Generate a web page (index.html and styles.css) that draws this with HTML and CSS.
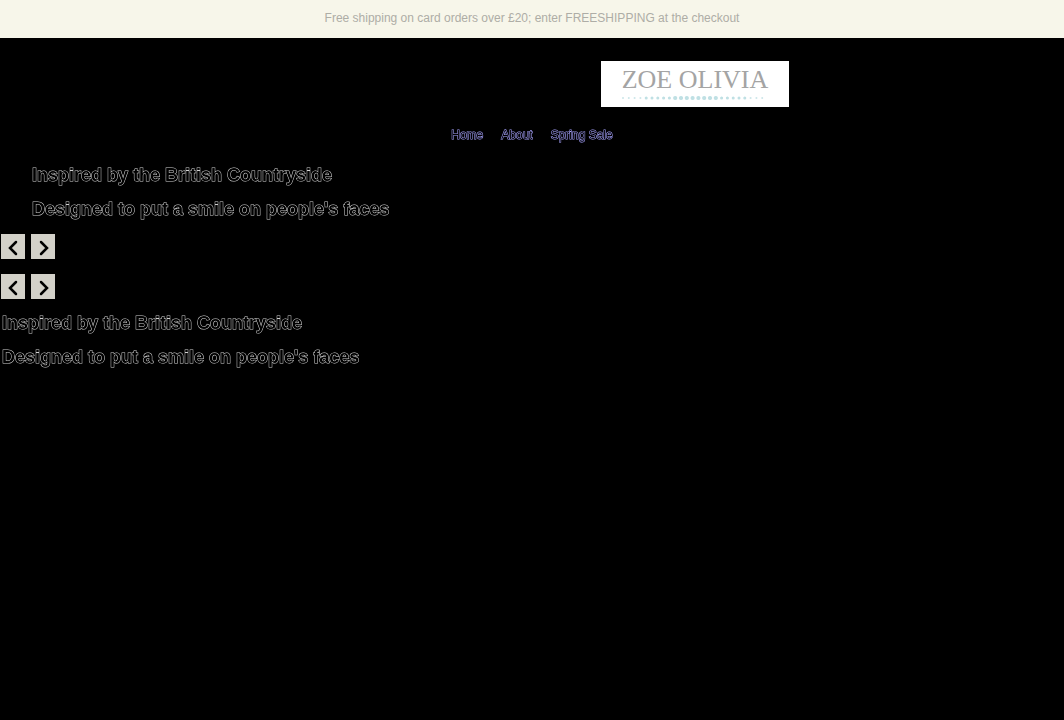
FILE: index.html
```
<!DOCTYPE html>
<html lang="en">
<head>
    <meta charset="UTF-8">
    <meta name="viewport" content="width=device-width, initial-scale=1.0">
    <title>Zoe Olivia</title>
    <link rel="stylesheet" href="styles.css">
</head>
<body>
    <div class="notice">Free shipping on card orders over £20; enter FREESHIPPING at the checkout</div>

    <header>
        <div class="branding">
            <div class="logo">
                <span class="logo-name">ZOE OLIVIA</span>
                <svg class="logo-dots" width="150" height="6" viewBox="0 0 150 6" fill="none" stroke="#bfe0e4" stroke-linecap="round">
                    <path d="M3 3H148" stroke-width="2" stroke-dasharray="0.01 5.79" opacity=".8"/>
                    <path d="M26.2 3H125" stroke-width="3" stroke-dasharray="0.01 5.79"/>
                    <path d="M55.2 3H97" stroke-width="4.2" stroke-dasharray="0.01 5.79"/>
                </svg>
            </div>
        </div>
        <nav>
            <a href="#home">Home</a>
            <a href="#about">About</a>
            <a href="#sale">Spring Sale</a>
        </nav>
    </header>

    <main>
        <!-- slider -->
        <div class="slides">
            <h2>Inspired by the British Countryside</h2>
            <h2>Designed to put a smile on people's faces</h2>
        </div>
        <div class="arrows">
            <button type="button" aria-label="Previous">
                <svg width="24" height="24" viewBox="0 0 24 24"><path d="M15 7L9 13L15 19"/></svg>
            </button>
            <button type="button" aria-label="Next">
                <svg width="24" height="24" viewBox="0 0 24 24"><path d="M10 7L16 13L10 19"/></svg>
            </button>
        </div>
        <div class="arrows">
            <button type="button" aria-label="Previous">
                <svg width="24" height="24" viewBox="0 0 24 24"><path d="M15 7L9 13L15 19"/></svg>
            </button>
            <button type="button" aria-label="Next">
                <svg width="24" height="24" viewBox="0 0 24 24"><path d="M10 7L16 13L10 19"/></svg>
            </button>
        </div>
        <div class="captions">
            <h2>Inspired by the British Countryside</h2>
            <h2>Designed to put a smile on people's faces</h2>
        </div>
    </main>
</body>
</html>
```
FILE: styles.css
```
body {
    font-family: "Liberation Sans", Arial, sans-serif;
    background-color: #000000;
    color: #000000;
    margin: 0;
    padding: 0;
}

.notice {
    background-color: #f7f6ea;
    color: #aeada6;
    padding-bottom: 2px;
    font-size: 12px;
    line-height: 36px;
    text-align: center;
}

header {
    padding-top: 23px;
}

.branding {
    padding-left: 326px;
}

.logo {
    display: flex;
    flex-direction: column;
    align-items: center;
    width: 188px;
    height: 46px;
    margin: 0 auto;
    background-color: #ffffff;
}

.logo-name {
    font-family: "Liberation Serif", "Times New Roman", serif;
    font-size: 26px;
    line-height: 30px;
    padding-top: 4px;
    color: #a4a4a4;
}

nav {
    display: flex;
    justify-content: center;
    gap: 18px;
    padding-top: 20px;
    font-size: 12px;
    line-height: 16px;
}

nav a {
    color: #000000;
    text-decoration: none;
    -webkit-text-stroke: 1px #a8a4ff;
    paint-order: stroke fill;
    will-change: opacity;
}

/* dark letters with a thin light edge */
h2 {
    margin: 0;
    font-size: 18px;
    font-weight: bold;
    line-height: 34px;
    -webkit-text-stroke: 1px #d0d0d0;
    paint-order: stroke fill;
    will-change: opacity;
}

.slides {
    padding: 15px 32px 8px;
}

.captions {
    padding: 0 2px;
    margin-top: -8px;
}

.arrows {
    display: flex;
    gap: 6px;
    padding: 0 1px;
    margin-bottom: 15px;
}

button {
    width: 24px;
    height: 25px;
    padding: 0;
    border: none;
    background-color: #d3d1c9;
    cursor: pointer;
}

button svg {
    display: block;
    fill: none;
    stroke: #000000;
    stroke-width: 2.5;
    stroke-linecap: round;
}
```
